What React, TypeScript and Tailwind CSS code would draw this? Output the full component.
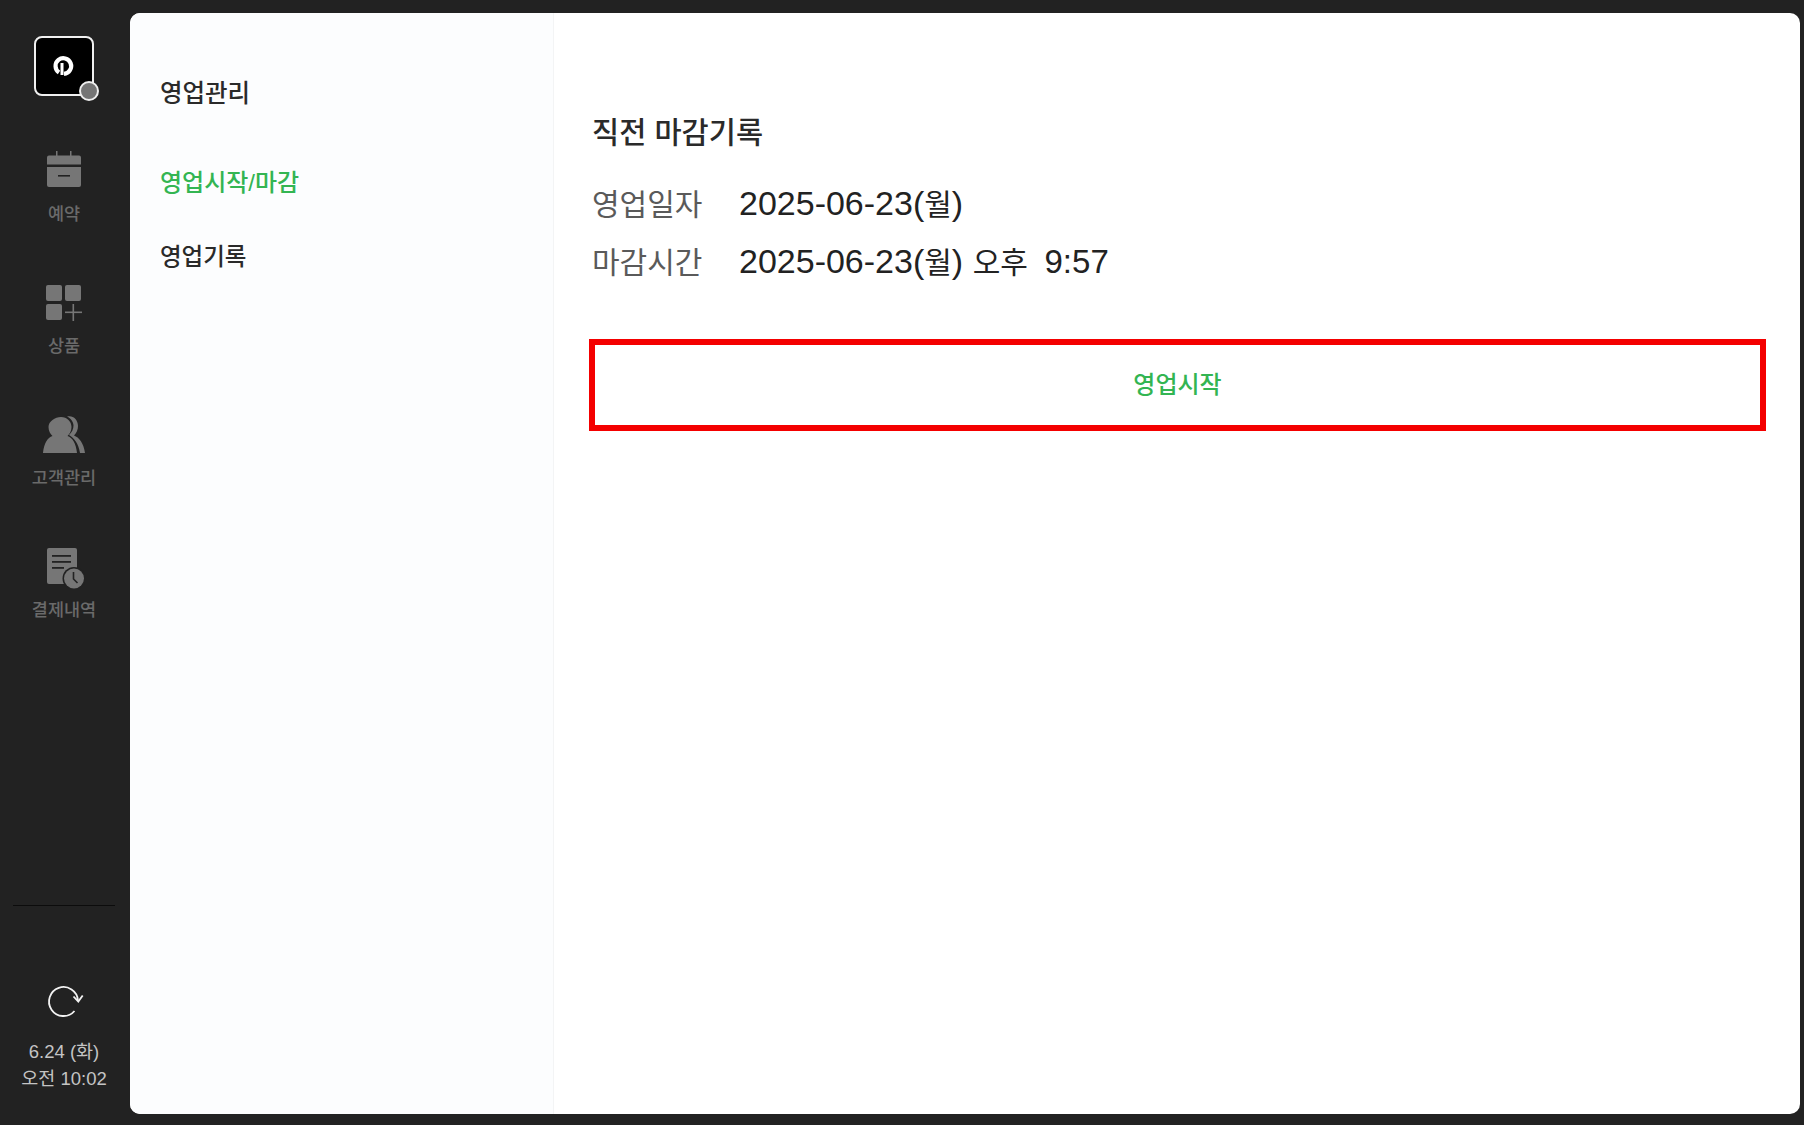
const font = { fontFamily: '"Liberation Sans", "Noto Sans CJK KR", sans-serif' }

function CalendarIcon() {
  return (
    <svg className="mb-[5px]" width="36" height="36" viewBox="0 0 36 36" fill="#767676">
      <rect x="10" y="0" width="1.5" height="5" />
      <rect x="24" y="0" width="1.5" height="5" />
      <path d="M1 6.500a2 2 0 0 1 2-2h30a2 2 0 0 1 2 2v7H1z" />
      <path d="M1 16h34v18a2 2 0 0 1-2 2H3a2 2 0 0 1-2-2z" />
      <rect x="12" y="24" width="12" height="1.600" fill="#222222" />
    </svg>
  )
}

function ProductIcon() {
  return (
    <svg width="36" height="36" viewBox="0 0 36 36" fill="#767676">
      <rect x="0" y="0" width="16" height="16" rx="2" />
      <rect x="19" y="0" width="16" height="16" rx="2" />
      <rect x="0" y="19" width="16" height="16" rx="2" />
      <rect x="26.500" y="19" width="1.600" height="17" />
      <rect x="19" y="26.500" width="17" height="1.600" />
    </svg>
  )
}

function CustomerIcon() {
  return (
    <svg width="44" height="38" viewBox="0 0 44 38" fill="#767676">
      <path d="M25 .5c6-1.500 11 3 11 9.500 0 4-1.500 7-4 9.500 5 2 9.500 7 11 17.500h-5c-1.500-10-6-15-11-18 3-3 4.500-6 4.500-9.500S29 2.500 25 .5z" />
      <path d="M19 1c6 0 10.500 4.500 10.500 10 0 4-1.800 7-4 9 5 1.800 8.500 7 9.500 17H1c1-10 4.500-15.200 9.500-17-2.200-2-4-5-4-9C6.500 5.500 13 1 19 1z" />
    </svg>
  )
}

function PaymentIcon() {
  return (
    <svg className="ml-[4px] mt-[4px]" width="38" height="42" viewBox="0 0 38 42">
      <path d="M2 0h26a2 2 0 0 1 2 2v34H2a2 2 0 0 1-2-2V2a2 2 0 0 1 2-2z" fill="#767676" />
      <rect x="5" y="7" width="19" height="1.800" fill="#222222" />
      <rect x="5" y="13" width="19" height="1.800" fill="#222222" />
      <rect x="5" y="19" width="12" height="1.800" fill="#222222" />
      <circle cx="27" cy="30.500" r="11.500" fill="#222222" />
      <circle cx="27" cy="30.500" r="10" fill="#767676" />
      <path d="M26.500 24v7l4 4" stroke="#222222" strokeWidth="1.600" fill="none" />
    </svg>
  )
}

function RefreshIcon() {
  return (
    <svg width="36" height="34" viewBox="0 0 36 34" fill="none" stroke="#f2f2f2" strokeWidth="1.800" className="overflow-visible">
      <path d="M32 16.500A14.500 14.500 0 1 0 28.500 27" />
      <path d="M27.500 12.500l4.800 5 4.400-6" />
    </svg>
  )
}

const navItems = [
  { label: '예약', icon: <CalendarIcon /> },
  { label: '상품', icon: <ProductIcon /> },
  { label: '고객관리', icon: <CustomerIcon /> },
  { label: '결제내역', icon: <PaymentIcon /> },
]

export default function App() {
  return (
    <div className="flex h-screen overflow-hidden bg-[#222222]" style={font}>
      {/* Sidebar */}
      <div className="mr-[2px] flex w-[128px] shrink-0 flex-col items-center pt-[36px]">
        <div className="relative flex h-[60px] w-[60px] items-center justify-center rounded-[8px] border-2 border-[#f0f0f0] bg-black">
          <svg width="22" height="22" viewBox="0 0 22 22" fill="none">
            <path d="M6 17.500A7.800 7.800 0 1 1 11 18.800" stroke="#ffffff" strokeWidth="4.200" />
            <rect x="7.500" y="8" width="3" height="12" fill="#ffffff" />
          </svg>
          <span className="absolute -bottom-[7px] -right-[7px] h-[20px] w-[20px] rounded-full border-2 border-[#eeeeee] bg-[#757575]" />
        </div>

        <div className="mt-[54px] flex flex-col items-center gap-[56px]">
          {navItems.map((item) => (
            <div key={item.label} className="flex h-[76px] flex-col items-center justify-between">
              <div className="flex h-[42px] items-center">{item.icon}</div>
              <span className="text-[17.500px] font-medium leading-[24px] text-[#6a6a6a]">{item.label}</span>
            </div>
          ))}
        </div>

        <div className="mt-auto h-px w-[102px] bg-[#0c0c0c]" />
        <div className="mt-[78px]">
          <RefreshIcon />
        </div>
        <div className="mb-[33px] mt-[20px] text-center text-[18.500px] leading-[27px] text-[#c4c4c4]">
          <div>6.24 (화)</div>
          <div>오전 10:02</div>
        </div>
      </div>

      {/* Main card */}
      <div className="mb-[11px] mr-[4px] mt-[13px] flex flex-1 overflow-hidden rounded-[10px] bg-white">
        <div className="w-[424px] shrink-0 border-r border-[#f3f4f5] bg-[#fcfdfe] pl-[30px] pt-[66px] font-medium text-[#2a2a2a]">
          <div className="text-[24.500px] leading-[30px]">영업관리</div>
          <div className="mt-[59px] text-[24px] leading-[30px] text-[#33b552]">영업시작/마감</div>
          <div className="mt-[44px] text-[23.500px] leading-[30px]">영업기록</div>
        </div>

        <div className="flex-1 pl-[35px] pr-[34px] pt-[102px]">
          <div className="ml-[3px] text-[29.500px] font-medium leading-[36px] text-[#2a2a2a]">직전 마감기록</div>
          <div className="ml-[3px] mt-[30px] flex items-baseline text-[34px] leading-[44px] text-[#222222]">
            <span className="w-[147px] text-[30px] text-[#5a5a5a]">영업일자</span>
            <span>
              2025-06-23(<span className="text-[30px]">월</span>)
            </span>
          </div>
          <div className="ml-[3px] mt-[12px] flex items-baseline text-[34px] leading-[44px] text-[#222222]">
            <span className="w-[147px] text-[30px] text-[#5a5a5a]">마감시간</span>
            <span className="whitespace-pre">
              2025-06-23(<span className="text-[30px]">월</span>) <span className="text-[30px]">오후  </span><span className="text-[33px]">9:57</span>
            </span>
          </div>
          <button className="mt-[54px] flex h-[92px] w-full items-center justify-center border-[6px] border-[#f40000] bg-white text-[24px] font-medium text-[#33b552]">
            영업시작
          </button>
        </div>
      </div>
    </div>
  )
}
